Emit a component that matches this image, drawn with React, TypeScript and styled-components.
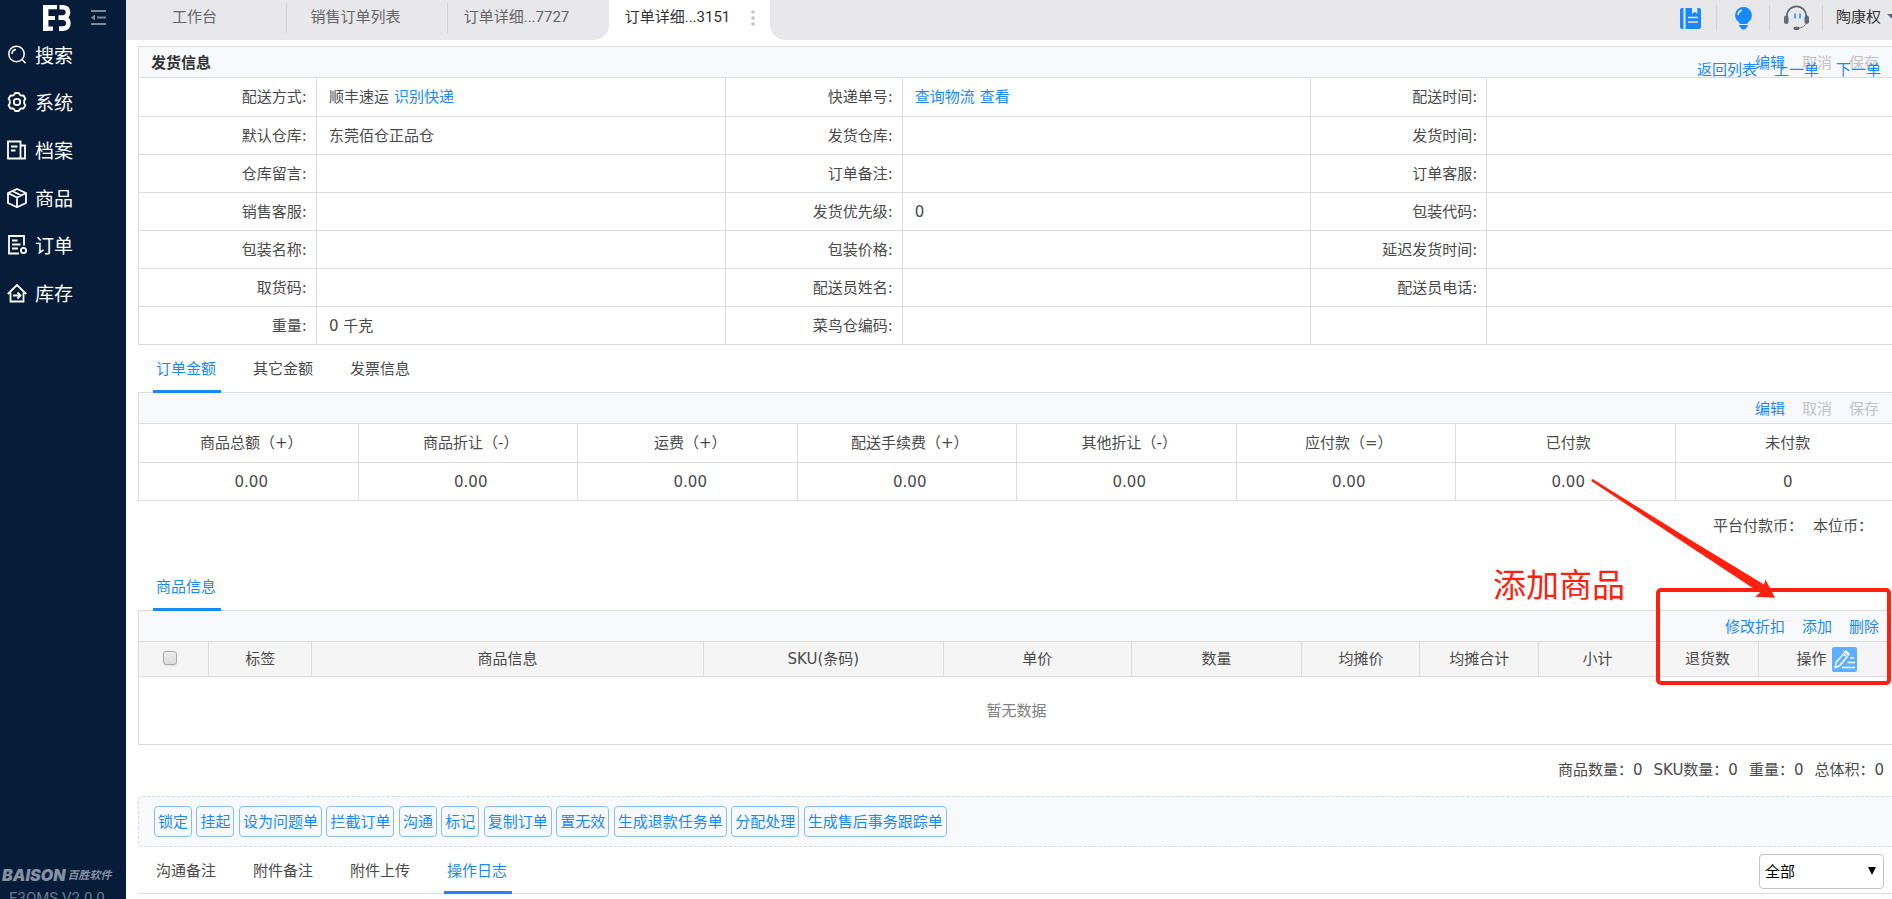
import React from "react";
import styled, { createGlobalStyle, css } from "styled-components";

const color = {
  navy: "#061c39",
  bar: "#e8e8ea",
  line: "#dcdcdc",
  panel: "#f8f9fd",
  head: "#f5f5f5",
  text: "#4a4a4a",
  link: "#1989fa",
  muted: "#c2c2c2",
  mark: "#ff2010",
};

const GlobalStyle = createGlobalStyle`
  * { box-sizing: border-box; }
  body {
    margin: 0;
    background: #fff;
    color: ${color.text};
    font-family: "DejaVu Sans", "Noto Sans CJK SC", sans-serif;
    font-size: 15px;
    line-height: 20px;
  }
  button, select, input { font: inherit; color: inherit; }
  a { text-decoration: none; }
`;

const Shell = styled.div`
  display: flex;
  height: 100vh;
  overflow: hidden;
`;

/* ---------- sidebar ---------- */

const Sidebar = styled.aside`
  flex: none;
  display: flex;
  flex-direction: column;
  width: 126px;
  background: ${color.navy};
  color: #fff;
`;

const Brand = styled.div`
  display: flex;
  align-items: flex-start;
  justify-content: space-between;
  height: 31px;
  padding: 5px 20px 0 43px;
`;

const FoldButton = styled.button`
  display: block;
  margin-top: 5px;
  padding: 0;
  border: 0;
  background: none;
  line-height: 0;
`;

const Menu = styled.nav`
  display: grid;
  grid-template-rows: repeat(6, 1fr);
  height: 286px;
`;

const MenuLink = styled.a`
  display: flex;
  align-items: center;
  gap: 8px;
  padding-left: 7px;
  color: #fff;
  font-family: "Noto Sans CJK SC", sans-serif;
  font-size: 19px;
  line-height: 24px;
`;

const Vendor = styled.footer`
  height: 34px;
  margin-top: auto;
  overflow: hidden;
  color: #6b798d;
  white-space: nowrap;
`;

const VendorName = styled.div`
  display: flex;
  align-items: center;
  gap: 2px;
  height: 20px;
  padding-left: 2px;
  color: #8590a1;
  font-family: Inter, "Noto Sans CJK SC", sans-serif;
  font-size: 16px;
  font-style: italic;
  font-weight: 900;
  small { font-size: 11px; font-weight: 700; }
`;

const Version = styled.div`
  padding: 3px 0 0 9px;
  font-family: Roboto, sans-serif;
  font-size: 15px;
  line-height: 20px;
`;

/* ---------- top bar ---------- */

const Main = styled.main`
  flex: 1;
  min-width: 0;
  overflow: hidden;
`;

const TopBar = styled.header`
  display: flex;
  height: 40px;
  font-family: Roboto, "Noto Sans CJK SC", sans-serif;
`;

const TabGroup = styled.div`
  display: flex;
  background: ${color.bar};
  border-bottom-right-radius: 15px;
`;

const PageTab = styled.button<{ $active?: boolean; $divided?: boolean }>`
  position: relative;
  width: 161px;
  height: 34px;
  padding: 0 24px 0 0;
  border: 0;
  background: none;
  color: ${(p) => (p.$active ? "#333" : "#666")};
  ${(p) =>
    p.$divided &&
    css`
      &::after {
        content: "";
        position: absolute;
        top: 3px;
        right: 0;
        width: 1px;
        height: 30px;
        background: #d2d2d4;
      }
    `}
`;

const MoreDots = styled.span`
  position: absolute;
  top: 10px;
  right: 15px;
  line-height: 0;
`;

const Tools = styled.div`
  flex: 1;
  display: flex;
  justify-content: flex-end;
  min-width: 0;
  background: ${color.bar};
  border-bottom-left-radius: 15px;
`;

const ToolButton = styled.button`
  display: flex;
  align-items: center;
  justify-content: center;
  width: 53px;
  height: 26px;
  margin-top: 5px;
  padding: 0;
  border: 0;
  border-right: 1px solid #d2d2d4;
  background: none;
`;

const UserButton = styled.button`
  display: flex;
  align-items: center;
  gap: 6px;
  width: 69px;
  height: 34px;
  padding: 0 0 0 13px;
  border: 0;
  background: none;
  color: #333;
  overflow: hidden;
  white-space: nowrap;
  svg { flex: none; }
`;

/* ---------- content ---------- */

const Content = styled.div`
  margin: 6px -3px 0 12px;
`;

const Section = styled.section`
  position: relative;
`;

const PanelBar = styled.div`
  display: flex;
  align-items: center;
  justify-content: flex-end;
  gap: 17px;
  height: 31px;
  padding: 2px 15px 0 12px;
  border: 1px solid ${color.line};
  border-bottom: 0;
  background: ${color.panel};
`;

const PanelTitle = styled.h2`
  margin: 0 auto 0 0;
  color: #333;
  font-size: 15px;
  line-height: 20px;
`;

const TextButton = styled.button`
  padding: 0;
  border: 0;
  background: none;
  color: ${color.link};
  &:disabled { color: ${color.muted}; }
`;

const Pager = styled.nav`
  position: absolute;
  top: 14px;
  right: 14px;
  display: flex;
  gap: 17px;
`;

const Link = styled.a`
  color: ${color.link};
`;

const Table = styled.table`
  width: 100%;
  table-layout: fixed;
  border-spacing: 0;
  border-right: 1px solid ${color.line};
  border-bottom: 1px solid ${color.line};
  th, td {
    border: 0 solid ${color.line};
    border-top-width: 1px;
    border-left-width: 1px;
    font-weight: 400;
  }
`;

const InfoTable = styled(Table)`
  tr { height: 38px; }
  tr:first-child { height: 39px; }
  th { padding: 0 9px 0 0; text-align: right; }
  td { padding: 0 12px; }
  td > * + * { margin-left: 5px; }
`;

const AmountTable = styled(Table)`
  th, td { padding: 0 0 0 6px; text-align: center; }
  th { height: 39px; }
  td { height: 38px; }
`;

const GoodsTable = styled(Table)`
  th { height: 35px; padding: 0; background: ${color.head}; text-align: center; }
  td { height: 68px; padding: 0; color: #808080; text-align: center; }
`;

const CheckBox = styled.input`
  appearance: none;
  display: block;
  width: 14px;
  height: 14px;
  margin: 0 auto;
  border: 1px solid #aaa;
  border-radius: 3px;
  background: linear-gradient(#ededed, #dcdcdc);
  box-shadow: 0 1px 1px #e0e0e0;
`;

const CheckCell = styled.span`
  display: block;
  padding: 0 7px 2px 0;
`;

const ActionHead = styled.span`
  display: flex;
  align-items: center;
  justify-content: center;
  gap: 5px;
`;

const EditButton = styled.button`
  width: 25px;
  height: 25px;
  padding: 0;
  border: 0;
  border-radius: 2px;
  background: #60aeff;
  line-height: 0;
`;

const Tabs = styled.div<{ $height: number; $lined?: boolean }>`
  display: flex;
  gap: 29px;
  height: ${(p) => p.$height}px;
  padding-left: 15px;
  border-bottom: ${(p) => (p.$lined ? `1px solid ${color.line}` : "0")};
`;

const Tab = styled.button<{ $active?: boolean }>`
  position: relative;
  padding: 1px 5px 0 3px;
  border: 0;
  background: none;
  color: ${(p) => (p.$active ? color.link : color.text)};
  ${(p) =>
    p.$active &&
    css`
      &::after {
        content: "";
        position: absolute;
        z-index: 1;
        left: 0;
        right: 0;
        bottom: -1px;
        height: 3px;
        background: ${color.link};
      }
    `}
`;

const Currency = styled.div`
  display: flex;
  justify-content: flex-end;
  gap: 10px;
  height: 61px;
  padding: 15px 22px 0 0;
`;

const Totals = styled.div`
  display: flex;
  align-items: center;
  justify-content: flex-end;
  gap: 11px;
  height: 51px;
  padding: 0 11px 2px 0;
`;

const Operations = styled.div`
  height: 51px;
  padding: 9px 15px;
  border: 1px dashed #d5dbe2;
  border-radius: 4px;
  background: ${color.panel};
  font-size: 14px;
`;

const OperationButton = styled.button`
  height: 31px;
  padding: 0 3px;
  border: 1px solid #85bff9;
  border-radius: 4px;
  background: none;
  color: ${color.link};
  font-size: 15px;
`;

const LogFilter = styled.label`
  position: relative;
  margin: 7px 11px 0 auto;
  height: 35px;
  color: #000;
  svg { position: absolute; right: 8px; top: 13px; pointer-events: none; }
`;

const Select = styled.select`
  appearance: none;
  width: 125px;
  height: 35px;
  padding: 0 5px;
  border: 1px solid #c4c4c4;
  border-radius: 4px;
  background: #fff;
`;

/* ---------- annotation ---------- */

const Note = styled.div`
  position: absolute;
  z-index: 3;
  top: 0;
  right: 270px;
  color: ${color.mark};
  font-size: 33px;
  line-height: 48px;
`;

const NoteFrame = styled.div`
  position: absolute;
  z-index: 2;
  top: 26px;
  right: 4px;
  width: 235px;
  height: 97px;
  border: 4px solid ${color.mark};
  border-radius: 5px;
  pointer-events: none;
`;

const NoteArrow = styled.svg`
  position: absolute;
  z-index: 3;
  top: -84px;
  right: 115px;
  pointer-events: none;
`;

/* ---------- icons ---------- */

const MenuIcon = ({ children }: { children: React.ReactNode }) => (
  <svg width="20" height="20" viewBox="0 0 20 20" fill="none" stroke="#fff" strokeWidth="1.8" aria-hidden="true">
    {children}
  </svg>
);

const menu = [
  {
    name: "搜索",
    icon: (
      <>
        <circle cx="9.5" cy="9" r="7.7" strokeWidth="1.5" />
        <path d="M5 9a4.6 4.6 0 0 1 4-4.4M15 14.500l3.500 3.800" strokeWidth="1.5" />
      </>
    ),
  },
  {
    name: "系统",
    icon: (
      <>
        <path d="M7.200 2.800L8.200 1h3.600l1 1.800 1.600.9 2.100-.2 1.900 3.200-1.200 1.900v2.800l1.200 1.900-1.900 3.200-2.100-.2-1.600.9-1 1.800H8.200l-1-1.800-1.600-.9-2.100.2-1.900-3.200 1.200-1.900V8.600L1.600 6.700l1.900-3.200 2.100.2z" strokeLinejoin="round" />
        <circle cx="10" cy="10" r="3.200" />
      </>
    ),
  },
  {
    name: "档案",
    icon: <path d="M1 1.500h12.500v17H1zM13.500 5.500H18v13h-4.500M4 6.500h6.500M4 10.500h4.500" />,
  },
  {
    name: "商品",
    icon: <path d="M10 1l9 4v10l-9 4.200L1 15V5zM1 5l9 4.500L19 5M10 9.500V19M5.300 3l9 4.500" />,
  },
  {
    name: "订单",
    icon: (
      <>
        <path d="M17 10.500V1H2v17.500h10M5 5.500h5.500M5 9.500h8.500M5 13.500h6" />
        <circle cx="16.500" cy="15.500" r="2.600" />
      </>
    ),
  },
  {
    name: "库存",
    icon: <path d="M.8 11L10 2l9.200 9M3.500 9.500v9h13v-9M6 12.500h7M10.500 9.500l3 3-3 3" />,
  },
];

const BrandMark = () => (
  <svg width="28" height="27" viewBox="0 0 28 27" fill="none" stroke="#fff" role="img" aria-label="E3">
    <path d="M2.700 0v26" strokeWidth="5.400" />
    <path d="M5 2.200h9M5 13h7M5 23.600h5" strokeWidth="4.200" />
    <path d="M16.500 2.300h3.500q5 .4 5 5t-5 5.300h-4.500M20 12.800q5.400.6 5.400 5.400t-5.400 5.400h-4" strokeWidth="4.600" />
  </svg>
);

const FoldIcon = () => (
  <svg width="15" height="16" viewBox="0 0 15 16" fill="#7d8999" aria-hidden="true">
    <path d="M0 0h15v2H0zM6 6.500h9v2H6zM0 13h15v2H0zM0 7.500l4-3v6z" />
  </svg>
);

const BookIcon = () => (
  <svg width="21" height="21" viewBox="0 0 21 21" fill={color.link} aria-hidden="true">
    <path d="M2 0h1.500v21H2a2 2 0 0 1-2-2V2a2 2 0 0 1 2-2z" />
    <path d="M5.500 0H12v6l2.700-2.200L17.300 6V0H19a2 2 0 0 1 2 2v17a2 2 0 0 1-2 2H5.500z" />
    <path d="M8 9.500h10M8 14h10" stroke="#e8e8ea" strokeWidth="1.500" />
  </svg>
);

const BulbIcon = () => (
  <svg width="17" height="23" viewBox="0 0 17 23" fill={color.link} aria-hidden="true">
    <path d="M8.500 0a8.300 8.300 0 0 1 5.300 14.700q-1.300 1-1.600 2.300H4.800q-.3-1.300-1.600-2.300A8.300 8.300 0 0 1 8.500 0zM4.300 18h8.400v1.500q-1 .5-1.600 1.700-.6 1.300-2.600 1.300t-2.600-1.300q-.6-1.200-1.600-1.700z" />
    <path d="M3.200 8a5.500 5.500 0 0 1 3.500-5" fill="none" stroke="#e8f3ff" strokeWidth="1.600" />
  </svg>
);

const HeadsetIcon = () => (
  <svg width="25" height="26" viewBox="0 0 25 26" fill="#5d6b7a" aria-hidden="true">
    <path d="M2.800 11a9.700 9.700 0 0 1 19.400 0" fill="none" stroke="#5d6b7a" strokeWidth="1.800" />
    <rect x="0" y="10.500" width="4.500" height="8.500" rx="2.200" />
    <rect x="20.500" y="10.500" width="4.500" height="8.500" rx="2.200" />
    <path d="M22.200 18q-1.500 4.500-8.500 5.200" fill="none" stroke="#7d8996" strokeWidth="1" />
    <ellipse cx="12.500" cy="23.300" rx="3" ry="1.900" />
    <path d="M11 8.500v5M16 8.500v5" stroke="#4ba3fb" strokeWidth="2" />
  </svg>
);

const EditIcon = () => (
  <svg width="25" height="25" viewBox="0 0 25 25" fill="none" stroke="#fff" strokeWidth="1.500" aria-hidden="true">
    <path d="M3.200 20.500l.8-5L11.500 7l3.500 3-7.500 8.800zM12.500 5l1.500-.8 3 2.600-.8 1.400z" />
    <path d="M18.500 11H22M15.500 15.500H23M10 20.500h13" />
  </svg>
);

/* ---------- data ---------- */

type Cell = [string, React.ReactNode?];

const delivery: Cell[][] = [
  [
    ["配送方式:", <><span>顺丰速运</span><Link href="#express">识别快递</Link></>],
    ["快递单号:", <><Link href="#track">查询物流</Link><Link href="#view">查看</Link></>],
    ["配送时间:"],
  ],
  [["默认仓库:", "东莞佰仓正品仓"], ["发货仓库:"], ["发货时间:"]],
  [["仓库留言:"], ["订单备注:"], ["订单客服:"]],
  [["销售客服:"], ["发货优先级:", "0"], ["包装代码:"]],
  [["包装名称:"], ["包装价格:"], ["延迟发货时间:"]],
  [["取货码:"], ["配送员姓名:"], ["配送员电话:"]],
  [["重量:", "0 千克"], ["菜鸟仓编码:"], [""]],
];

const infoColumns = ["10.13%", "23.3%", "10.07%", "23.22%", "10.07%", "23.21%"];

const amounts = [
  ["商品总额（+）", "0.00"],
  ["商品折让（-）", "0.00"],
  ["运费（+）", "0.00"],
  ["配送手续费（+）", "0.00"],
  ["其他折让（-）", "0.00"],
  ["应付款（=）", "0.00"],
  ["已付款", "0.00"],
  ["未付款", "0"],
];

const goodsColumns: [string, string][] = [
  ["标签", "5.86%"],
  ["商品信息", "22.3%"],
  ["SKU(条码)", "13.66%"],
  ["单价", "10.7%"],
  ["数量", "9.73%"],
  ["均摊价", "6.72%"],
  ["均摊合计", "6.74%"],
  ["小计", "6.74%"],
  ["退货数", "5.8%"],
];

const operations = [
  "锁定", "挂起", "设为问题单", "拦截订单", "沟通", "标记", "复制订单",
  "置无效", "生成退款任务单", "分配处理", "生成售后事务跟踪单",
];

export default function App() {
  return (
    <>
      <GlobalStyle />
      <Shell>
        <Sidebar>
          <Brand>
            <BrandMark />
            <FoldButton aria-label="收起菜单"><FoldIcon /></FoldButton>
          </Brand>
          <Menu>
            {menu.map((m) => (
              <MenuLink href="#" key={m.name}>
                <MenuIcon>{m.icon}</MenuIcon>
                {m.name}
              </MenuLink>
            ))}
          </Menu>
          <Vendor>
            <VendorName>BAISON<small>百胜软件</small></VendorName>
            <Version>E3OMS V2.0.0</Version>
          </Vendor>
        </Sidebar>

        <Main>
          <TopBar>
            <TabGroup>
              <PageTab $divided>工作台</PageTab>
              <PageTab $divided>销售订单列表</PageTab>
              <PageTab>订单详细...7727</PageTab>
            </TabGroup>
            <PageTab $active>
              订单详细...3151
              <MoreDots>
                <svg width="4" height="16" viewBox="0 0 4 16" fill="#c0c2c8" aria-hidden="true">
                  <circle cx="2" cy="2" r="1.800" />
                  <circle cx="2" cy="8" r="1.800" />
                  <circle cx="2" cy="14" r="1.800" />
                </svg>
              </MoreDots>
            </PageTab>
            <Tools>
              <ToolButton aria-label="文档"><BookIcon /></ToolButton>
              <ToolButton aria-label="提示"><BulbIcon /></ToolButton>
              <ToolButton aria-label="客服"><HeadsetIcon /></ToolButton>
              <UserButton>
                陶康权
                <svg width="12" height="6" viewBox="0 0 12 6" fill="#5d6b7a" aria-hidden="true">
                  <path d="M0 0h12L6 6z" />
                </svg>
              </UserButton>
            </Tools>
          </TopBar>

          <Content>
            <Section>
              <PanelBar>
                <PanelTitle>发货信息</PanelTitle>
                <TextButton>编辑</TextButton>
                <TextButton disabled>取消</TextButton>
                <TextButton disabled>保存</TextButton>
              </PanelBar>
              <Pager>
                <Link href="#list">返回列表</Link>
                <Link href="#prev">上一单</Link>
                <Link href="#next">下一单</Link>
              </Pager>
              <InfoTable>
                <colgroup>
                  {infoColumns.map((w, i) => <col key={i} width={w} />)}
                </colgroup>
                <tbody>
                  {delivery.map((row, i) => (
                    <tr key={i}>
                      {row.map(([label, value], j) => (
                        <React.Fragment key={j}>
                          <th scope="row">{label}</th>
                          <td>{value}</td>
                        </React.Fragment>
                      ))}
                    </tr>
                  ))}
                </tbody>
              </InfoTable>
            </Section>

            <Section>
              <Tabs $height={47}>
                <Tab $active>订单金额</Tab>
                <Tab>其它金额</Tab>
                <Tab>发票信息</Tab>
              </Tabs>
              <PanelBar>
                <TextButton>编辑</TextButton>
                <TextButton disabled>取消</TextButton>
                <TextButton disabled>保存</TextButton>
              </PanelBar>
              <AmountTable>
                <thead>
                  <tr>{amounts.map(([name]) => <th scope="col" key={name}>{name}</th>)}</tr>
                </thead>
                <tbody>
                  <tr>{amounts.map(([name, value]) => <td key={name}>{value}</td>)}</tr>
                </tbody>
              </AmountTable>
              <Currency>
                <span>平台付款币：</span>
                <span>本位币：</span>
              </Currency>
            </Section>

            <Section>
              <Tabs $height={48}>
                <Tab $active>商品信息</Tab>
              </Tabs>
              <PanelBar>
                <TextButton>修改折扣</TextButton>
                <TextButton>添加</TextButton>
                <TextButton>删除</TextButton>
              </PanelBar>
              <GoodsTable>
                <colgroup>
                  <col width="4.01%" />
                  {goodsColumns.map(([name, w]) => <col key={name} width={w} />)}
                  <col width="7.74%" />
                </colgroup>
                <thead>
                  <tr>
                    <th scope="col">
                      <CheckCell><CheckBox type="checkbox" aria-label="全选" /></CheckCell>
                    </th>
                    {goodsColumns.map(([name]) => <th scope="col" key={name}>{name}</th>)}
                    <th scope="col">
                      <ActionHead>
                        操作
                        <EditButton aria-label="编辑列"><EditIcon /></EditButton>
                      </ActionHead>
                    </th>
                  </tr>
                </thead>
                <tbody>
                  <tr><td colSpan={11}>暂无数据</td></tr>
                </tbody>
              </GoodsTable>
              <Totals>
                <span>商品数量：0</span>
                <span>SKU数量：0</span>
                <span>重量：0</span>
                <span>总体积：0</span>
              </Totals>
              <Note>添加商品</Note>
              <NoteFrame />
              <NoteArrow width="190" height="122" viewBox="0 0 190 122" fill={color.mark} aria-hidden="true">
                <path d="M1.500 1.500Q3 .5 5 2.500L100.700 62l73.300 44.500 1.500-5 9.500 18.200-20-1 5-4L90 62 3.500 4.500Q1 3.500 1.500 1.500Z" />
              </NoteArrow>
            </Section>

            <Operations>
              {operations.map((name) => (
                <React.Fragment key={name}>
                  <OperationButton>{name}</OperationButton>{" "}
                </React.Fragment>
              ))}
            </Operations>

            <Tabs $height={47} $lined>
              <Tab>沟通备注</Tab>
              <Tab>附件备注</Tab>
              <Tab>附件上传</Tab>
              <Tab $active>操作日志</Tab>
              <LogFilter>
                <Select aria-label="日志类型" defaultValue="all">
                  <option value="all">全部</option>
                </Select>
                <svg width="8" height="8" viewBox="0 0 8 8" aria-hidden="true">
                  <path d="M0 0h8L4 8z" />
                </svg>
              </LogFilter>
            </Tabs>
          </Content>
        </Main>
      </Shell>
    </>
  );
}
